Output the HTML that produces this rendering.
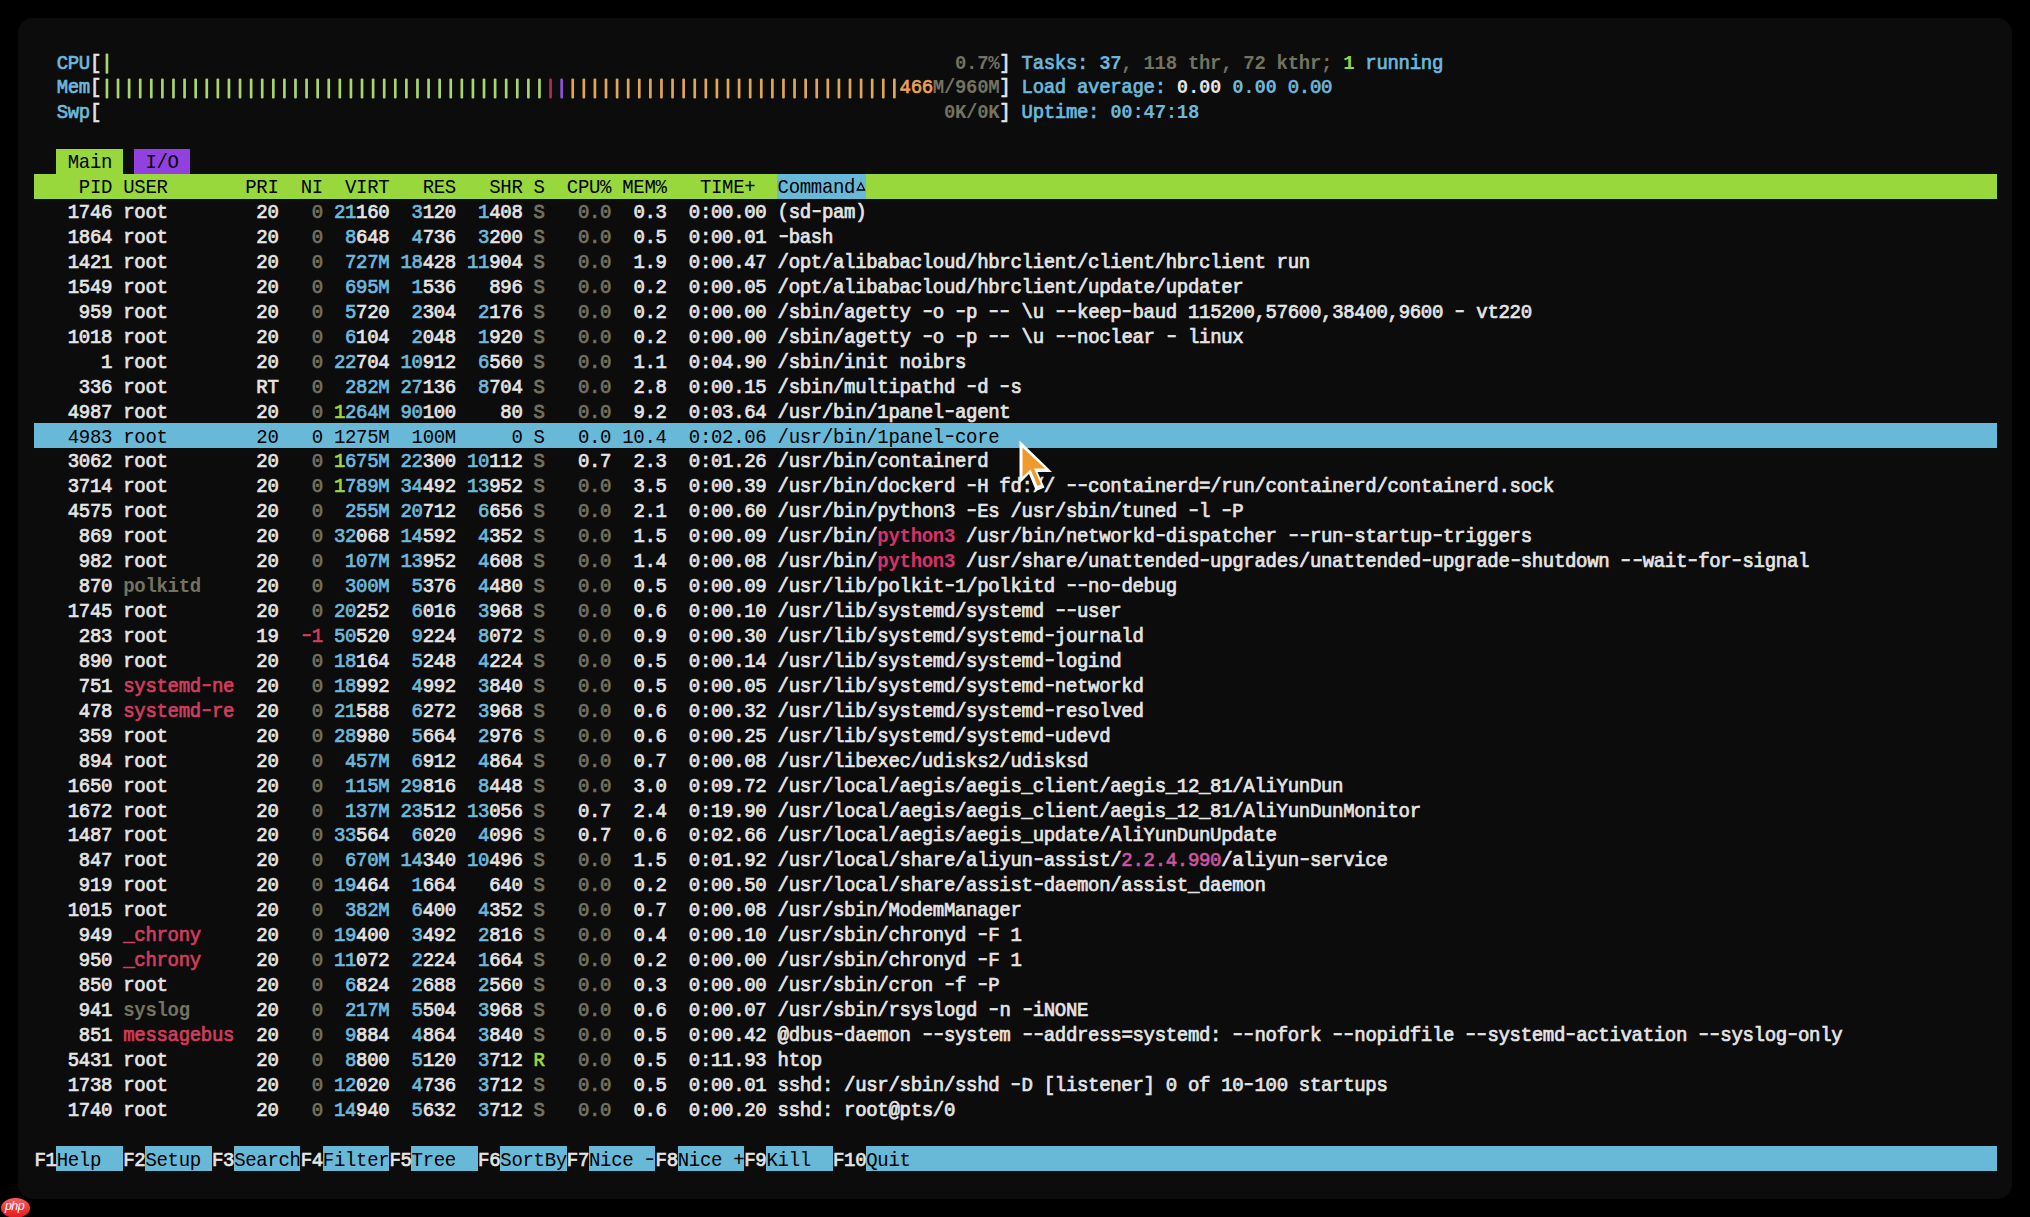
<!DOCTYPE html>
<html><head><meta charset="utf-8"><style>
html,body{margin:0;padding:0;width:2030px;height:1217px;background:#000;overflow:hidden}
#panel{position:absolute;left:18px;top:18px;width:1994px;height:1181px;background:#0c0c0c;border-radius:15px}
.b{position:absolute}
.l{position:absolute;white-space:pre;-webkit-text-stroke-width:0.7px;font-family:"Liberation Mono",monospace;font-size:19px;letter-spacing:-0.3113px;line-height:24.92px;height:24.92px;transform:scaleY(1.06);transform-origin:0 17.5px}
.W{color:#e4e4e4}.G{color:#747260}.C{color:#6cb8dc}.GR{color:#9ad640}.R{color:#d23c5c}.O{color:#eba150}.P{color:#9440e0}
.MAG{color:#c8559e}.PY{color:#d8306a;font-weight:bold;-webkit-text-stroke-width:0.1px}.K{color:#000;-webkit-text-stroke-width:0}
.h{display:inline-block;transform:scaleX(1.35) translateY(-0.8px)}
.GRn{color:#9ad640;-webkit-text-stroke-width:0}.Rn{color:#d23c5c;-webkit-text-stroke-width:0}.Pn{color:#9440e0;-webkit-text-stroke-width:0}.On{color:#eba150;-webkit-text-stroke-width:0}
.CB{color:#6cb8dc;font-weight:bold;-webkit-text-stroke-width:0}.WB{color:#e4e4e4;font-weight:bold;-webkit-text-stroke-width:0}.GRB{color:#9ad640;font-weight:bold;-webkit-text-stroke-width:0}.GB{color:#747260;font-weight:bold;-webkit-text-stroke-width:0}.GS{color:#747260;-webkit-text-stroke-width:0.8px}
</style></head><body>
<div id="panel"></div>

<div class="b" style="left:56.48px;top:148.94px;width:66.54px;height:24.93px;background:#98d83c"></div>
<div class="b" style="left:134.11px;top:148.94px;width:55.45px;height:24.93px;background:#9240e0"></div>
<div class="b" style="left:34.30px;top:173.88px;width:1963.00px;height:24.93px;background:#98d83c"></div>
<div class="b" style="left:777.36px;top:173.88px;width:88.72px;height:24.93px;background:#68b8d8"></div>
<div class="b" style="left:34.30px;top:423.22px;width:1963.00px;height:24.93px;background:#68b8d8"></div>
<div class="b" style="left:56.48px;top:1146.34px;width:66.54px;height:24.93px;background:#68b8d8"></div>
<div class="b" style="left:145.20px;top:1146.34px;width:66.54px;height:24.93px;background:#68b8d8"></div>
<div class="b" style="left:233.93px;top:1146.34px;width:66.54px;height:24.93px;background:#68b8d8"></div>
<div class="b" style="left:322.65px;top:1146.34px;width:66.54px;height:24.93px;background:#68b8d8"></div>
<div class="b" style="left:411.37px;top:1146.34px;width:66.54px;height:24.93px;background:#68b8d8"></div>
<div class="b" style="left:500.10px;top:1146.34px;width:66.54px;height:24.93px;background:#68b8d8"></div>
<div class="b" style="left:588.82px;top:1146.34px;width:66.54px;height:24.93px;background:#68b8d8"></div>
<div class="b" style="left:677.54px;top:1146.34px;width:66.54px;height:24.93px;background:#68b8d8"></div>
<div class="b" style="left:766.27px;top:1146.34px;width:66.54px;height:24.93px;background:#68b8d8"></div>
<div class="b" style="left:866.08px;top:1146.34px;width:1131.22px;height:24.93px;background:#68b8d8"></div>
<svg class="b" style="left:0;top:0" width="2030" height="120" viewBox="0 0 2030 120"><rect x="105.59" y="53.47" width="2.7" height="20.2" rx="1" fill="#a9d66c"/><rect x="105.59" y="78.40" width="2.7" height="20.2" rx="1" fill="#a9d66c"/><rect x="116.68" y="78.40" width="2.7" height="20.2" rx="1" fill="#a9d66c"/><rect x="127.77" y="78.40" width="2.7" height="20.2" rx="1" fill="#a9d66c"/><rect x="138.86" y="78.40" width="2.7" height="20.2" rx="1" fill="#a9d66c"/><rect x="149.95" y="78.40" width="2.7" height="20.2" rx="1" fill="#a9d66c"/><rect x="161.04" y="78.40" width="2.7" height="20.2" rx="1" fill="#a9d66c"/><rect x="172.13" y="78.40" width="2.7" height="20.2" rx="1" fill="#a9d66c"/><rect x="183.22" y="78.40" width="2.7" height="20.2" rx="1" fill="#a9d66c"/><rect x="194.32" y="78.40" width="2.7" height="20.2" rx="1" fill="#a9d66c"/><rect x="205.41" y="78.40" width="2.7" height="20.2" rx="1" fill="#a9d66c"/><rect x="216.50" y="78.40" width="2.7" height="20.2" rx="1" fill="#a9d66c"/><rect x="227.59" y="78.40" width="2.7" height="20.2" rx="1" fill="#a9d66c"/><rect x="238.68" y="78.40" width="2.7" height="20.2" rx="1" fill="#a9d66c"/><rect x="249.77" y="78.40" width="2.7" height="20.2" rx="1" fill="#a9d66c"/><rect x="260.86" y="78.40" width="2.7" height="20.2" rx="1" fill="#a9d66c"/><rect x="271.95" y="78.40" width="2.7" height="20.2" rx="1" fill="#a9d66c"/><rect x="283.04" y="78.40" width="2.7" height="20.2" rx="1" fill="#a9d66c"/><rect x="294.13" y="78.40" width="2.7" height="20.2" rx="1" fill="#a9d66c"/><rect x="305.22" y="78.40" width="2.7" height="20.2" rx="1" fill="#a9d66c"/><rect x="316.31" y="78.40" width="2.7" height="20.2" rx="1" fill="#a9d66c"/><rect x="327.40" y="78.40" width="2.7" height="20.2" rx="1" fill="#a9d66c"/><rect x="338.49" y="78.40" width="2.7" height="20.2" rx="1" fill="#a9d66c"/><rect x="349.58" y="78.40" width="2.7" height="20.2" rx="1" fill="#a9d66c"/><rect x="360.67" y="78.40" width="2.7" height="20.2" rx="1" fill="#a9d66c"/><rect x="371.76" y="78.40" width="2.7" height="20.2" rx="1" fill="#a9d66c"/><rect x="382.85" y="78.40" width="2.7" height="20.2" rx="1" fill="#a9d66c"/><rect x="393.94" y="78.40" width="2.7" height="20.2" rx="1" fill="#a9d66c"/><rect x="405.03" y="78.40" width="2.7" height="20.2" rx="1" fill="#a9d66c"/><rect x="416.12" y="78.40" width="2.7" height="20.2" rx="1" fill="#a9d66c"/><rect x="427.21" y="78.40" width="2.7" height="20.2" rx="1" fill="#a9d66c"/><rect x="438.30" y="78.40" width="2.7" height="20.2" rx="1" fill="#a9d66c"/><rect x="449.39" y="78.40" width="2.7" height="20.2" rx="1" fill="#a9d66c"/><rect x="460.48" y="78.40" width="2.7" height="20.2" rx="1" fill="#a9d66c"/><rect x="471.58" y="78.40" width="2.7" height="20.2" rx="1" fill="#a9d66c"/><rect x="482.67" y="78.40" width="2.7" height="20.2" rx="1" fill="#a9d66c"/><rect x="493.76" y="78.40" width="2.7" height="20.2" rx="1" fill="#a9d66c"/><rect x="504.85" y="78.40" width="2.7" height="20.2" rx="1" fill="#a9d66c"/><rect x="515.94" y="78.40" width="2.7" height="20.2" rx="1" fill="#a9d66c"/><rect x="527.03" y="78.40" width="2.7" height="20.2" rx="1" fill="#a9d66c"/><rect x="538.12" y="78.40" width="2.7" height="20.2" rx="1" fill="#a9d66c"/><rect x="549.21" y="78.40" width="2.7" height="20.2" rx="1" fill="#b42a55"/><rect x="560.30" y="78.40" width="2.7" height="20.2" rx="1" fill="#8c50dc"/><rect x="571.39" y="78.40" width="2.7" height="20.2" rx="1" fill="#e1a55a"/><rect x="582.48" y="78.40" width="2.7" height="20.2" rx="1" fill="#e1a55a"/><rect x="593.57" y="78.40" width="2.7" height="20.2" rx="1" fill="#e1a55a"/><rect x="604.66" y="78.40" width="2.7" height="20.2" rx="1" fill="#e1a55a"/><rect x="615.75" y="78.40" width="2.7" height="20.2" rx="1" fill="#e1a55a"/><rect x="626.84" y="78.40" width="2.7" height="20.2" rx="1" fill="#e1a55a"/><rect x="637.93" y="78.40" width="2.7" height="20.2" rx="1" fill="#e1a55a"/><rect x="649.02" y="78.40" width="2.7" height="20.2" rx="1" fill="#e1a55a"/><rect x="660.11" y="78.40" width="2.7" height="20.2" rx="1" fill="#e1a55a"/><rect x="671.20" y="78.40" width="2.7" height="20.2" rx="1" fill="#e1a55a"/><rect x="682.29" y="78.40" width="2.7" height="20.2" rx="1" fill="#e1a55a"/><rect x="693.38" y="78.40" width="2.7" height="20.2" rx="1" fill="#e1a55a"/><rect x="704.47" y="78.40" width="2.7" height="20.2" rx="1" fill="#e1a55a"/><rect x="715.56" y="78.40" width="2.7" height="20.2" rx="1" fill="#e1a55a"/><rect x="726.65" y="78.40" width="2.7" height="20.2" rx="1" fill="#e1a55a"/><rect x="737.74" y="78.40" width="2.7" height="20.2" rx="1" fill="#e1a55a"/><rect x="748.84" y="78.40" width="2.7" height="20.2" rx="1" fill="#e1a55a"/><rect x="759.93" y="78.40" width="2.7" height="20.2" rx="1" fill="#e1a55a"/><rect x="771.02" y="78.40" width="2.7" height="20.2" rx="1" fill="#e1a55a"/><rect x="782.11" y="78.40" width="2.7" height="20.2" rx="1" fill="#e1a55a"/><rect x="793.20" y="78.40" width="2.7" height="20.2" rx="1" fill="#e1a55a"/><rect x="804.29" y="78.40" width="2.7" height="20.2" rx="1" fill="#e1a55a"/><rect x="815.38" y="78.40" width="2.7" height="20.2" rx="1" fill="#e1a55a"/><rect x="826.47" y="78.40" width="2.7" height="20.2" rx="1" fill="#e1a55a"/><rect x="837.56" y="78.40" width="2.7" height="20.2" rx="1" fill="#e1a55a"/><rect x="848.65" y="78.40" width="2.7" height="20.2" rx="1" fill="#e1a55a"/><rect x="859.74" y="78.40" width="2.7" height="20.2" rx="1" fill="#e1a55a"/><rect x="870.83" y="78.40" width="2.7" height="20.2" rx="1" fill="#e1a55a"/><rect x="881.92" y="78.40" width="2.7" height="20.2" rx="1" fill="#e1a55a"/><rect x="893.01" y="78.40" width="2.7" height="20.2" rx="1" fill="#e1a55a"/></svg>
<div class="l C" style="left:56.68px;top:51.50px">CPU</div>
<div class="l W" style="left:89.95px;top:51.50px">[</div>
<div class="l GB" style="left:955.00px;top:51.50px">0.7%</div>
<div class="l W" style="left:999.36px;top:51.50px">]</div>
<div class="l C" style="left:1021.55px;top:51.50px">Tasks: </div>
<div class="l CB" style="left:1099.18px;top:51.50px">37</div>
<div class="l GB" style="left:1121.36px;top:51.50px">, </div>
<div class="l GB" style="left:1143.54px;top:51.50px">118 thr</div>
<div class="l GB" style="left:1221.17px;top:51.50px">, </div>
<div class="l GB" style="left:1243.35px;top:51.50px">72 kthr</div>
<div class="l GB" style="left:1320.99px;top:51.50px">; </div>
<div class="l GRB" style="left:1343.17px;top:51.50px">1</div>
<div class="l C" style="left:1354.26px;top:51.50px"> running</div>
<div class="l C" style="left:56.68px;top:76.44px">Mem</div>
<div class="l W" style="left:89.95px;top:76.44px">[</div>
<div class="l O" style="left:899.55px;top:76.44px">466</div>
<div class="l GB" style="left:932.82px;top:76.44px">M/960M</div>
<div class="l W" style="left:999.36px;top:76.44px">]</div>
<div class="l C" style="left:1021.55px;top:76.44px">Load average: </div>
<div class="l WB" style="left:1176.81px;top:76.44px">0.00 </div>
<div class="l CB" style="left:1232.26px;top:76.44px">0.00 </div>
<div class="l C" style="left:1287.72px;top:76.44px">0.00</div>
<div class="l C" style="left:56.68px;top:101.37px">Swp</div>
<div class="l W" style="left:89.95px;top:101.37px">[</div>
<div class="l GB" style="left:943.91px;top:101.37px">0K/0K</div>
<div class="l W" style="left:999.36px;top:101.37px">]</div>
<div class="l C" style="left:1021.55px;top:101.37px">Uptime: </div>
<div class="l CB" style="left:1110.27px;top:101.37px">00:47:18</div>
<div class="l K" style="left:67.77px;top:151.24px">Main</div>
<div class="l K" style="left:145.40px;top:151.24px">I/O</div>
<div class="l K" style="left:78.86px;top:176.18px">PID</div>
<div class="l K" style="left:123.22px;top:176.18px">USER</div>
<div class="l K" style="left:245.22px;top:176.18px">PRI</div>
<div class="l K" style="left:300.67px;top:176.18px">NI</div>
<div class="l K" style="left:345.03px;top:176.18px">VIRT</div>
<div class="l K" style="left:422.66px;top:176.18px">RES</div>
<div class="l K" style="left:489.21px;top:176.18px">SHR</div>
<div class="l K" style="left:533.57px;top:176.18px">S</div>
<div class="l K" style="left:566.84px;top:176.18px">CPU%</div>
<div class="l K" style="left:622.29px;top:176.18px">MEM%</div>
<div class="l K" style="left:699.92px;top:176.18px">TIME+</div>
<div class="l K" style="left:777.56px;top:176.18px">Command</div>
<div class="l W" style="left:67.77px;top:201.11px">1746</div>
<div class="l W" style="left:123.22px;top:201.11px">root</div>
<div class="l W" style="left:256.31px;top:201.11px">20</div>
<div class="l G" style="left:311.76px;top:201.11px">0</div>
<div class="l C" style="left:333.94px;top:201.11px">21</div>
<div class="l W" style="left:356.12px;top:201.11px">160</div>
<div class="l C" style="left:411.57px;top:201.11px">3</div>
<div class="l W" style="left:422.66px;top:201.11px">120</div>
<div class="l C" style="left:478.12px;top:201.11px">1</div>
<div class="l W" style="left:489.21px;top:201.11px">408</div>
<div class="l GS" style="left:533.57px;top:201.11px">S</div>
<div class="l G" style="left:577.93px;top:201.11px">0.0</div>
<div class="l W" style="left:633.38px;top:201.11px">0.3</div>
<div class="l W" style="left:688.83px;top:201.11px">0:00.00</div>
<div class="l W" style="left:777.56px;top:201.11px">(sd<span class="h">-</span>pam)</div>
<div class="l W" style="left:67.77px;top:226.05px">1864</div>
<div class="l W" style="left:123.22px;top:226.05px">root</div>
<div class="l W" style="left:256.31px;top:226.05px">20</div>
<div class="l G" style="left:311.76px;top:226.05px">0</div>
<div class="l C" style="left:345.03px;top:226.05px">8</div>
<div class="l W" style="left:356.12px;top:226.05px">648</div>
<div class="l C" style="left:411.57px;top:226.05px">4</div>
<div class="l W" style="left:422.66px;top:226.05px">736</div>
<div class="l C" style="left:478.12px;top:226.05px">3</div>
<div class="l W" style="left:489.21px;top:226.05px">200</div>
<div class="l GS" style="left:533.57px;top:226.05px">S</div>
<div class="l G" style="left:577.93px;top:226.05px">0.0</div>
<div class="l W" style="left:633.38px;top:226.05px">0.5</div>
<div class="l W" style="left:688.83px;top:226.05px">0:00.01</div>
<div class="l W" style="left:777.56px;top:226.05px"><span class="h">-</span>bash</div>
<div class="l W" style="left:67.77px;top:250.98px">1421</div>
<div class="l W" style="left:123.22px;top:250.98px">root</div>
<div class="l W" style="left:256.31px;top:250.98px">20</div>
<div class="l G" style="left:311.76px;top:250.98px">0</div>
<div class="l C" style="left:345.03px;top:250.98px">727M</div>
<div class="l C" style="left:400.48px;top:250.98px">18</div>
<div class="l W" style="left:422.66px;top:250.98px">428</div>
<div class="l C" style="left:467.03px;top:250.98px">11</div>
<div class="l W" style="left:489.21px;top:250.98px">904</div>
<div class="l GS" style="left:533.57px;top:250.98px">S</div>
<div class="l G" style="left:577.93px;top:250.98px">0.0</div>
<div class="l W" style="left:633.38px;top:250.98px">1.9</div>
<div class="l W" style="left:688.83px;top:250.98px">0:00.47</div>
<div class="l W" style="left:777.56px;top:250.98px">/opt/alibabacloud/hbrclient/client/hbrclient run</div>
<div class="l W" style="left:67.77px;top:275.92px">1549</div>
<div class="l W" style="left:123.22px;top:275.92px">root</div>
<div class="l W" style="left:256.31px;top:275.92px">20</div>
<div class="l G" style="left:311.76px;top:275.92px">0</div>
<div class="l C" style="left:345.03px;top:275.92px">695M</div>
<div class="l C" style="left:411.57px;top:275.92px">1</div>
<div class="l W" style="left:422.66px;top:275.92px">536</div>
<div class="l W" style="left:489.21px;top:275.92px">896</div>
<div class="l GS" style="left:533.57px;top:275.92px">S</div>
<div class="l G" style="left:577.93px;top:275.92px">0.0</div>
<div class="l W" style="left:633.38px;top:275.92px">0.2</div>
<div class="l W" style="left:688.83px;top:275.92px">0:00.05</div>
<div class="l W" style="left:777.56px;top:275.92px">/opt/alibabacloud/hbrclient/update/updater</div>
<div class="l W" style="left:78.86px;top:300.85px">959</div>
<div class="l W" style="left:123.22px;top:300.85px">root</div>
<div class="l W" style="left:256.31px;top:300.85px">20</div>
<div class="l G" style="left:311.76px;top:300.85px">0</div>
<div class="l C" style="left:345.03px;top:300.85px">5</div>
<div class="l W" style="left:356.12px;top:300.85px">720</div>
<div class="l C" style="left:411.57px;top:300.85px">2</div>
<div class="l W" style="left:422.66px;top:300.85px">304</div>
<div class="l C" style="left:478.12px;top:300.85px">2</div>
<div class="l W" style="left:489.21px;top:300.85px">176</div>
<div class="l GS" style="left:533.57px;top:300.85px">S</div>
<div class="l G" style="left:577.93px;top:300.85px">0.0</div>
<div class="l W" style="left:633.38px;top:300.85px">0.2</div>
<div class="l W" style="left:688.83px;top:300.85px">0:00.00</div>
<div class="l W" style="left:777.56px;top:300.85px">/sbin/agetty <span class="h">-</span>o <span class="h">-</span>p <span class="h">-</span><span class="h">-</span> \u <span class="h">-</span><span class="h">-</span>keep<span class="h">-</span>baud 115200,57600,38400,9600 <span class="h">-</span> vt220</div>
<div class="l W" style="left:67.77px;top:325.78px">1018</div>
<div class="l W" style="left:123.22px;top:325.78px">root</div>
<div class="l W" style="left:256.31px;top:325.78px">20</div>
<div class="l G" style="left:311.76px;top:325.78px">0</div>
<div class="l C" style="left:345.03px;top:325.78px">6</div>
<div class="l W" style="left:356.12px;top:325.78px">104</div>
<div class="l C" style="left:411.57px;top:325.78px">2</div>
<div class="l W" style="left:422.66px;top:325.78px">048</div>
<div class="l C" style="left:478.12px;top:325.78px">1</div>
<div class="l W" style="left:489.21px;top:325.78px">920</div>
<div class="l GS" style="left:533.57px;top:325.78px">S</div>
<div class="l G" style="left:577.93px;top:325.78px">0.0</div>
<div class="l W" style="left:633.38px;top:325.78px">0.2</div>
<div class="l W" style="left:688.83px;top:325.78px">0:00.00</div>
<div class="l W" style="left:777.56px;top:325.78px">/sbin/agetty <span class="h">-</span>o <span class="h">-</span>p <span class="h">-</span><span class="h">-</span> \u <span class="h">-</span><span class="h">-</span>noclear <span class="h">-</span> linux</div>
<div class="l W" style="left:101.04px;top:350.72px">1</div>
<div class="l W" style="left:123.22px;top:350.72px">root</div>
<div class="l W" style="left:256.31px;top:350.72px">20</div>
<div class="l G" style="left:311.76px;top:350.72px">0</div>
<div class="l C" style="left:333.94px;top:350.72px">22</div>
<div class="l W" style="left:356.12px;top:350.72px">704</div>
<div class="l C" style="left:400.48px;top:350.72px">10</div>
<div class="l W" style="left:422.66px;top:350.72px">912</div>
<div class="l C" style="left:478.12px;top:350.72px">6</div>
<div class="l W" style="left:489.21px;top:350.72px">560</div>
<div class="l GS" style="left:533.57px;top:350.72px">S</div>
<div class="l G" style="left:577.93px;top:350.72px">0.0</div>
<div class="l W" style="left:633.38px;top:350.72px">1.1</div>
<div class="l W" style="left:688.83px;top:350.72px">0:04.90</div>
<div class="l W" style="left:777.56px;top:350.72px">/sbin/init noibrs</div>
<div class="l W" style="left:78.86px;top:375.65px">336</div>
<div class="l W" style="left:123.22px;top:375.65px">root</div>
<div class="l W" style="left:256.31px;top:375.65px">RT</div>
<div class="l G" style="left:311.76px;top:375.65px">0</div>
<div class="l C" style="left:345.03px;top:375.65px">282M</div>
<div class="l C" style="left:400.48px;top:375.65px">27</div>
<div class="l W" style="left:422.66px;top:375.65px">136</div>
<div class="l C" style="left:478.12px;top:375.65px">8</div>
<div class="l W" style="left:489.21px;top:375.65px">704</div>
<div class="l GS" style="left:533.57px;top:375.65px">S</div>
<div class="l G" style="left:577.93px;top:375.65px">0.0</div>
<div class="l W" style="left:633.38px;top:375.65px">2.8</div>
<div class="l W" style="left:688.83px;top:375.65px">0:00.15</div>
<div class="l W" style="left:777.56px;top:375.65px">/sbin/multipathd <span class="h">-</span>d <span class="h">-</span>s</div>
<div class="l W" style="left:67.77px;top:400.59px">4987</div>
<div class="l W" style="left:123.22px;top:400.59px">root</div>
<div class="l W" style="left:256.31px;top:400.59px">20</div>
<div class="l G" style="left:311.76px;top:400.59px">0</div>
<div class="l GR" style="left:333.94px;top:400.59px">1</div>
<div class="l C" style="left:345.03px;top:400.59px">264M</div>
<div class="l C" style="left:400.48px;top:400.59px">90</div>
<div class="l W" style="left:422.66px;top:400.59px">100</div>
<div class="l W" style="left:500.30px;top:400.59px">80</div>
<div class="l GS" style="left:533.57px;top:400.59px">S</div>
<div class="l G" style="left:577.93px;top:400.59px">0.0</div>
<div class="l W" style="left:633.38px;top:400.59px">9.2</div>
<div class="l W" style="left:688.83px;top:400.59px">0:03.64</div>
<div class="l W" style="left:777.56px;top:400.59px">/usr/bin/1panel<span class="h">-</span>agent</div>
<div class="l K" style="left:67.77px;top:425.52px">4983</div>
<div class="l K" style="left:123.22px;top:425.52px">root</div>
<div class="l K" style="left:256.31px;top:425.52px">20</div>
<div class="l K" style="left:311.76px;top:425.52px">0</div>
<div class="l K" style="left:333.94px;top:425.52px">1</div>
<div class="l K" style="left:345.03px;top:425.52px">275M</div>
<div class="l K" style="left:411.57px;top:425.52px">100M</div>
<div class="l K" style="left:511.39px;top:425.52px">0</div>
<div class="l K" style="left:533.57px;top:425.52px">S</div>
<div class="l K" style="left:577.93px;top:425.52px">0.0</div>
<div class="l K" style="left:622.29px;top:425.52px">10.4</div>
<div class="l K" style="left:688.83px;top:425.52px">0:02.06</div>
<div class="l K" style="left:777.56px;top:425.52px">/usr/bin/1panel<span class="h">-</span>core</div>
<div class="l W" style="left:67.77px;top:450.46px">3062</div>
<div class="l W" style="left:123.22px;top:450.46px">root</div>
<div class="l W" style="left:256.31px;top:450.46px">20</div>
<div class="l G" style="left:311.76px;top:450.46px">0</div>
<div class="l GR" style="left:333.94px;top:450.46px">1</div>
<div class="l C" style="left:345.03px;top:450.46px">675M</div>
<div class="l C" style="left:400.48px;top:450.46px">22</div>
<div class="l W" style="left:422.66px;top:450.46px">300</div>
<div class="l C" style="left:467.03px;top:450.46px">10</div>
<div class="l W" style="left:489.21px;top:450.46px">112</div>
<div class="l GS" style="left:533.57px;top:450.46px">S</div>
<div class="l W" style="left:577.93px;top:450.46px">0.7</div>
<div class="l W" style="left:633.38px;top:450.46px">2.3</div>
<div class="l W" style="left:688.83px;top:450.46px">0:01.26</div>
<div class="l W" style="left:777.56px;top:450.46px">/usr/bin/containerd</div>
<div class="l W" style="left:67.77px;top:475.39px">3714</div>
<div class="l W" style="left:123.22px;top:475.39px">root</div>
<div class="l W" style="left:256.31px;top:475.39px">20</div>
<div class="l G" style="left:311.76px;top:475.39px">0</div>
<div class="l GR" style="left:333.94px;top:475.39px">1</div>
<div class="l C" style="left:345.03px;top:475.39px">789M</div>
<div class="l C" style="left:400.48px;top:475.39px">34</div>
<div class="l W" style="left:422.66px;top:475.39px">492</div>
<div class="l C" style="left:467.03px;top:475.39px">13</div>
<div class="l W" style="left:489.21px;top:475.39px">952</div>
<div class="l GS" style="left:533.57px;top:475.39px">S</div>
<div class="l G" style="left:577.93px;top:475.39px">0.0</div>
<div class="l W" style="left:633.38px;top:475.39px">3.5</div>
<div class="l W" style="left:688.83px;top:475.39px">0:00.39</div>
<div class="l W" style="left:777.56px;top:475.39px">/usr/bin/dockerd <span class="h">-</span>H fd:// <span class="h">-</span><span class="h">-</span>containerd=/run/containerd/containerd.sock</div>
<div class="l W" style="left:67.77px;top:500.33px">4575</div>
<div class="l W" style="left:123.22px;top:500.33px">root</div>
<div class="l W" style="left:256.31px;top:500.33px">20</div>
<div class="l G" style="left:311.76px;top:500.33px">0</div>
<div class="l C" style="left:345.03px;top:500.33px">255M</div>
<div class="l C" style="left:400.48px;top:500.33px">20</div>
<div class="l W" style="left:422.66px;top:500.33px">712</div>
<div class="l C" style="left:478.12px;top:500.33px">6</div>
<div class="l W" style="left:489.21px;top:500.33px">656</div>
<div class="l GS" style="left:533.57px;top:500.33px">S</div>
<div class="l G" style="left:577.93px;top:500.33px">0.0</div>
<div class="l W" style="left:633.38px;top:500.33px">2.1</div>
<div class="l W" style="left:688.83px;top:500.33px">0:00.60</div>
<div class="l W" style="left:777.56px;top:500.33px">/usr/bin/python3 <span class="h">-</span>Es /usr/sbin/tuned <span class="h">-</span>l <span class="h">-</span>P</div>
<div class="l W" style="left:78.86px;top:525.26px">869</div>
<div class="l W" style="left:123.22px;top:525.26px">root</div>
<div class="l W" style="left:256.31px;top:525.26px">20</div>
<div class="l G" style="left:311.76px;top:525.26px">0</div>
<div class="l C" style="left:333.94px;top:525.26px">32</div>
<div class="l W" style="left:356.12px;top:525.26px">068</div>
<div class="l C" style="left:400.48px;top:525.26px">14</div>
<div class="l W" style="left:422.66px;top:525.26px">592</div>
<div class="l C" style="left:478.12px;top:525.26px">4</div>
<div class="l W" style="left:489.21px;top:525.26px">352</div>
<div class="l GS" style="left:533.57px;top:525.26px">S</div>
<div class="l G" style="left:577.93px;top:525.26px">0.0</div>
<div class="l W" style="left:633.38px;top:525.26px">1.5</div>
<div class="l W" style="left:688.83px;top:525.26px">0:00.09</div>
<div class="l W" style="left:777.56px;top:525.26px">/usr/bin/</div>
<div class="l PY" style="left:877.37px;top:525.26px">python3</div>
<div class="l W" style="left:955.00px;top:525.26px"> /usr/bin/networkd<span class="h">-</span>dispatcher <span class="h">-</span><span class="h">-</span>run<span class="h">-</span>startup<span class="h">-</span>triggers</div>
<div class="l W" style="left:78.86px;top:550.20px">982</div>
<div class="l W" style="left:123.22px;top:550.20px">root</div>
<div class="l W" style="left:256.31px;top:550.20px">20</div>
<div class="l G" style="left:311.76px;top:550.20px">0</div>
<div class="l C" style="left:345.03px;top:550.20px">107M</div>
<div class="l C" style="left:400.48px;top:550.20px">13</div>
<div class="l W" style="left:422.66px;top:550.20px">952</div>
<div class="l C" style="left:478.12px;top:550.20px">4</div>
<div class="l W" style="left:489.21px;top:550.20px">608</div>
<div class="l GS" style="left:533.57px;top:550.20px">S</div>
<div class="l G" style="left:577.93px;top:550.20px">0.0</div>
<div class="l W" style="left:633.38px;top:550.20px">1.4</div>
<div class="l W" style="left:688.83px;top:550.20px">0:00.08</div>
<div class="l W" style="left:777.56px;top:550.20px">/usr/bin/</div>
<div class="l PY" style="left:877.37px;top:550.20px">python3</div>
<div class="l W" style="left:955.00px;top:550.20px"> /usr/share/unattended<span class="h">-</span>upgrades/unattended<span class="h">-</span>upgrade<span class="h">-</span>shutdown <span class="h">-</span><span class="h">-</span>wait<span class="h">-</span>for<span class="h">-</span>signal</div>
<div class="l W" style="left:78.86px;top:575.13px">870</div>
<div class="l GB" style="left:123.22px;top:575.13px">polkitd</div>
<div class="l W" style="left:256.31px;top:575.13px">20</div>
<div class="l G" style="left:311.76px;top:575.13px">0</div>
<div class="l C" style="left:345.03px;top:575.13px">300M</div>
<div class="l C" style="left:411.57px;top:575.13px">5</div>
<div class="l W" style="left:422.66px;top:575.13px">376</div>
<div class="l C" style="left:478.12px;top:575.13px">4</div>
<div class="l W" style="left:489.21px;top:575.13px">480</div>
<div class="l GS" style="left:533.57px;top:575.13px">S</div>
<div class="l G" style="left:577.93px;top:575.13px">0.0</div>
<div class="l W" style="left:633.38px;top:575.13px">0.5</div>
<div class="l W" style="left:688.83px;top:575.13px">0:00.09</div>
<div class="l W" style="left:777.56px;top:575.13px">/usr/lib/polkit<span class="h">-</span>1/polkitd <span class="h">-</span><span class="h">-</span>no<span class="h">-</span>debug</div>
<div class="l W" style="left:67.77px;top:600.07px">1745</div>
<div class="l W" style="left:123.22px;top:600.07px">root</div>
<div class="l W" style="left:256.31px;top:600.07px">20</div>
<div class="l G" style="left:311.76px;top:600.07px">0</div>
<div class="l C" style="left:333.94px;top:600.07px">20</div>
<div class="l W" style="left:356.12px;top:600.07px">252</div>
<div class="l C" style="left:411.57px;top:600.07px">6</div>
<div class="l W" style="left:422.66px;top:600.07px">016</div>
<div class="l C" style="left:478.12px;top:600.07px">3</div>
<div class="l W" style="left:489.21px;top:600.07px">968</div>
<div class="l GS" style="left:533.57px;top:600.07px">S</div>
<div class="l G" style="left:577.93px;top:600.07px">0.0</div>
<div class="l W" style="left:633.38px;top:600.07px">0.6</div>
<div class="l W" style="left:688.83px;top:600.07px">0:00.10</div>
<div class="l W" style="left:777.56px;top:600.07px">/usr/lib/systemd/systemd <span class="h">-</span><span class="h">-</span>user</div>
<div class="l W" style="left:78.86px;top:625.00px">283</div>
<div class="l W" style="left:123.22px;top:625.00px">root</div>
<div class="l W" style="left:256.31px;top:625.00px">19</div>
<div class="l R" style="left:300.67px;top:625.00px"><span class="h">-</span>1</div>
<div class="l C" style="left:333.94px;top:625.00px">50</div>
<div class="l W" style="left:356.12px;top:625.00px">520</div>
<div class="l C" style="left:411.57px;top:625.00px">9</div>
<div class="l W" style="left:422.66px;top:625.00px">224</div>
<div class="l C" style="left:478.12px;top:625.00px">8</div>
<div class="l W" style="left:489.21px;top:625.00px">072</div>
<div class="l GS" style="left:533.57px;top:625.00px">S</div>
<div class="l G" style="left:577.93px;top:625.00px">0.0</div>
<div class="l W" style="left:633.38px;top:625.00px">0.9</div>
<div class="l W" style="left:688.83px;top:625.00px">0:00.30</div>
<div class="l W" style="left:777.56px;top:625.00px">/usr/lib/systemd/systemd<span class="h">-</span>journald</div>
<div class="l W" style="left:78.86px;top:649.94px">890</div>
<div class="l W" style="left:123.22px;top:649.94px">root</div>
<div class="l W" style="left:256.31px;top:649.94px">20</div>
<div class="l G" style="left:311.76px;top:649.94px">0</div>
<div class="l C" style="left:333.94px;top:649.94px">18</div>
<div class="l W" style="left:356.12px;top:649.94px">164</div>
<div class="l C" style="left:411.57px;top:649.94px">5</div>
<div class="l W" style="left:422.66px;top:649.94px">248</div>
<div class="l C" style="left:478.12px;top:649.94px">4</div>
<div class="l W" style="left:489.21px;top:649.94px">224</div>
<div class="l GS" style="left:533.57px;top:649.94px">S</div>
<div class="l G" style="left:577.93px;top:649.94px">0.0</div>
<div class="l W" style="left:633.38px;top:649.94px">0.5</div>
<div class="l W" style="left:688.83px;top:649.94px">0:00.14</div>
<div class="l W" style="left:777.56px;top:649.94px">/usr/lib/systemd/systemd<span class="h">-</span>logind</div>
<div class="l W" style="left:78.86px;top:674.88px">751</div>
<div class="l R" style="left:123.22px;top:674.88px">systemd<span class="h">-</span>ne</div>
<div class="l W" style="left:256.31px;top:674.88px">20</div>
<div class="l G" style="left:311.76px;top:674.88px">0</div>
<div class="l C" style="left:333.94px;top:674.88px">18</div>
<div class="l W" style="left:356.12px;top:674.88px">992</div>
<div class="l C" style="left:411.57px;top:674.88px">4</div>
<div class="l W" style="left:422.66px;top:674.88px">992</div>
<div class="l C" style="left:478.12px;top:674.88px">3</div>
<div class="l W" style="left:489.21px;top:674.88px">840</div>
<div class="l GS" style="left:533.57px;top:674.88px">S</div>
<div class="l G" style="left:577.93px;top:674.88px">0.0</div>
<div class="l W" style="left:633.38px;top:674.88px">0.5</div>
<div class="l W" style="left:688.83px;top:674.88px">0:00.05</div>
<div class="l W" style="left:777.56px;top:674.88px">/usr/lib/systemd/systemd<span class="h">-</span>networkd</div>
<div class="l W" style="left:78.86px;top:699.81px">478</div>
<div class="l R" style="left:123.22px;top:699.81px">systemd<span class="h">-</span>re</div>
<div class="l W" style="left:256.31px;top:699.81px">20</div>
<div class="l G" style="left:311.76px;top:699.81px">0</div>
<div class="l C" style="left:333.94px;top:699.81px">21</div>
<div class="l W" style="left:356.12px;top:699.81px">588</div>
<div class="l C" style="left:411.57px;top:699.81px">6</div>
<div class="l W" style="left:422.66px;top:699.81px">272</div>
<div class="l C" style="left:478.12px;top:699.81px">3</div>
<div class="l W" style="left:489.21px;top:699.81px">968</div>
<div class="l GS" style="left:533.57px;top:699.81px">S</div>
<div class="l G" style="left:577.93px;top:699.81px">0.0</div>
<div class="l W" style="left:633.38px;top:699.81px">0.6</div>
<div class="l W" style="left:688.83px;top:699.81px">0:00.32</div>
<div class="l W" style="left:777.56px;top:699.81px">/usr/lib/systemd/systemd<span class="h">-</span>resolved</div>
<div class="l W" style="left:78.86px;top:724.75px">359</div>
<div class="l W" style="left:123.22px;top:724.75px">root</div>
<div class="l W" style="left:256.31px;top:724.75px">20</div>
<div class="l G" style="left:311.76px;top:724.75px">0</div>
<div class="l C" style="left:333.94px;top:724.75px">28</div>
<div class="l W" style="left:356.12px;top:724.75px">980</div>
<div class="l C" style="left:411.57px;top:724.75px">5</div>
<div class="l W" style="left:422.66px;top:724.75px">664</div>
<div class="l C" style="left:478.12px;top:724.75px">2</div>
<div class="l W" style="left:489.21px;top:724.75px">976</div>
<div class="l GS" style="left:533.57px;top:724.75px">S</div>
<div class="l G" style="left:577.93px;top:724.75px">0.0</div>
<div class="l W" style="left:633.38px;top:724.75px">0.6</div>
<div class="l W" style="left:688.83px;top:724.75px">0:00.25</div>
<div class="l W" style="left:777.56px;top:724.75px">/usr/lib/systemd/systemd<span class="h">-</span>udevd</div>
<div class="l W" style="left:78.86px;top:749.68px">894</div>
<div class="l W" style="left:123.22px;top:749.68px">root</div>
<div class="l W" style="left:256.31px;top:749.68px">20</div>
<div class="l G" style="left:311.76px;top:749.68px">0</div>
<div class="l C" style="left:345.03px;top:749.68px">457M</div>
<div class="l C" style="left:411.57px;top:749.68px">6</div>
<div class="l W" style="left:422.66px;top:749.68px">912</div>
<div class="l C" style="left:478.12px;top:749.68px">4</div>
<div class="l W" style="left:489.21px;top:749.68px">864</div>
<div class="l GS" style="left:533.57px;top:749.68px">S</div>
<div class="l G" style="left:577.93px;top:749.68px">0.0</div>
<div class="l W" style="left:633.38px;top:749.68px">0.7</div>
<div class="l W" style="left:688.83px;top:749.68px">0:00.08</div>
<div class="l W" style="left:777.56px;top:749.68px">/usr/libexec/udisks2/udisksd</div>
<div class="l W" style="left:67.77px;top:774.62px">1650</div>
<div class="l W" style="left:123.22px;top:774.62px">root</div>
<div class="l W" style="left:256.31px;top:774.62px">20</div>
<div class="l G" style="left:311.76px;top:774.62px">0</div>
<div class="l C" style="left:345.03px;top:774.62px">115M</div>
<div class="l C" style="left:400.48px;top:774.62px">29</div>
<div class="l W" style="left:422.66px;top:774.62px">816</div>
<div class="l C" style="left:478.12px;top:774.62px">8</div>
<div class="l W" style="left:489.21px;top:774.62px">448</div>
<div class="l GS" style="left:533.57px;top:774.62px">S</div>
<div class="l G" style="left:577.93px;top:774.62px">0.0</div>
<div class="l W" style="left:633.38px;top:774.62px">3.0</div>
<div class="l W" style="left:688.83px;top:774.62px">0:09.72</div>
<div class="l W" style="left:777.56px;top:774.62px">/usr/local/aegis/aegis_client/aegis_12_81/AliYunDun</div>
<div class="l W" style="left:67.77px;top:799.55px">1672</div>
<div class="l W" style="left:123.22px;top:799.55px">root</div>
<div class="l W" style="left:256.31px;top:799.55px">20</div>
<div class="l G" style="left:311.76px;top:799.55px">0</div>
<div class="l C" style="left:345.03px;top:799.55px">137M</div>
<div class="l C" style="left:400.48px;top:799.55px">23</div>
<div class="l W" style="left:422.66px;top:799.55px">512</div>
<div class="l C" style="left:467.03px;top:799.55px">13</div>
<div class="l W" style="left:489.21px;top:799.55px">056</div>
<div class="l GS" style="left:533.57px;top:799.55px">S</div>
<div class="l W" style="left:577.93px;top:799.55px">0.7</div>
<div class="l W" style="left:633.38px;top:799.55px">2.4</div>
<div class="l W" style="left:688.83px;top:799.55px">0:19.90</div>
<div class="l W" style="left:777.56px;top:799.55px">/usr/local/aegis/aegis_client/aegis_12_81/AliYunDunMonitor</div>
<div class="l W" style="left:67.77px;top:824.49px">1487</div>
<div class="l W" style="left:123.22px;top:824.49px">root</div>
<div class="l W" style="left:256.31px;top:824.49px">20</div>
<div class="l G" style="left:311.76px;top:824.49px">0</div>
<div class="l C" style="left:333.94px;top:824.49px">33</div>
<div class="l W" style="left:356.12px;top:824.49px">564</div>
<div class="l C" style="left:411.57px;top:824.49px">6</div>
<div class="l W" style="left:422.66px;top:824.49px">020</div>
<div class="l C" style="left:478.12px;top:824.49px">4</div>
<div class="l W" style="left:489.21px;top:824.49px">096</div>
<div class="l GS" style="left:533.57px;top:824.49px">S</div>
<div class="l W" style="left:577.93px;top:824.49px">0.7</div>
<div class="l W" style="left:633.38px;top:824.49px">0.6</div>
<div class="l W" style="left:688.83px;top:824.49px">0:02.66</div>
<div class="l W" style="left:777.56px;top:824.49px">/usr/local/aegis/aegis_update/AliYunDunUpdate</div>
<div class="l W" style="left:78.86px;top:849.42px">847</div>
<div class="l W" style="left:123.22px;top:849.42px">root</div>
<div class="l W" style="left:256.31px;top:849.42px">20</div>
<div class="l G" style="left:311.76px;top:849.42px">0</div>
<div class="l C" style="left:345.03px;top:849.42px">670M</div>
<div class="l C" style="left:400.48px;top:849.42px">14</div>
<div class="l W" style="left:422.66px;top:849.42px">340</div>
<div class="l C" style="left:467.03px;top:849.42px">10</div>
<div class="l W" style="left:489.21px;top:849.42px">496</div>
<div class="l GS" style="left:533.57px;top:849.42px">S</div>
<div class="l G" style="left:577.93px;top:849.42px">0.0</div>
<div class="l W" style="left:633.38px;top:849.42px">1.5</div>
<div class="l W" style="left:688.83px;top:849.42px">0:01.92</div>
<div class="l W" style="left:777.56px;top:849.42px">/usr/local/share/aliyun<span class="h">-</span>assist/</div>
<div class="l MAG" style="left:1121.36px;top:849.42px">2.2.4.990</div>
<div class="l W" style="left:1221.17px;top:849.42px">/aliyun<span class="h">-</span>service</div>
<div class="l W" style="left:78.86px;top:874.35px">919</div>
<div class="l W" style="left:123.22px;top:874.35px">root</div>
<div class="l W" style="left:256.31px;top:874.35px">20</div>
<div class="l G" style="left:311.76px;top:874.35px">0</div>
<div class="l C" style="left:333.94px;top:874.35px">19</div>
<div class="l W" style="left:356.12px;top:874.35px">464</div>
<div class="l C" style="left:411.57px;top:874.35px">1</div>
<div class="l W" style="left:422.66px;top:874.35px">664</div>
<div class="l W" style="left:489.21px;top:874.35px">640</div>
<div class="l GS" style="left:533.57px;top:874.35px">S</div>
<div class="l G" style="left:577.93px;top:874.35px">0.0</div>
<div class="l W" style="left:633.38px;top:874.35px">0.2</div>
<div class="l W" style="left:688.83px;top:874.35px">0:00.50</div>
<div class="l W" style="left:777.56px;top:874.35px">/usr/local/share/assist<span class="h">-</span>daemon/assist_daemon</div>
<div class="l W" style="left:67.77px;top:899.29px">1015</div>
<div class="l W" style="left:123.22px;top:899.29px">root</div>
<div class="l W" style="left:256.31px;top:899.29px">20</div>
<div class="l G" style="left:311.76px;top:899.29px">0</div>
<div class="l C" style="left:345.03px;top:899.29px">382M</div>
<div class="l C" style="left:411.57px;top:899.29px">6</div>
<div class="l W" style="left:422.66px;top:899.29px">400</div>
<div class="l C" style="left:478.12px;top:899.29px">4</div>
<div class="l W" style="left:489.21px;top:899.29px">352</div>
<div class="l GS" style="left:533.57px;top:899.29px">S</div>
<div class="l G" style="left:577.93px;top:899.29px">0.0</div>
<div class="l W" style="left:633.38px;top:899.29px">0.7</div>
<div class="l W" style="left:688.83px;top:899.29px">0:00.08</div>
<div class="l W" style="left:777.56px;top:899.29px">/usr/sbin/ModemManager</div>
<div class="l W" style="left:78.86px;top:924.22px">949</div>
<div class="l R" style="left:123.22px;top:924.22px">_chrony</div>
<div class="l W" style="left:256.31px;top:924.22px">20</div>
<div class="l G" style="left:311.76px;top:924.22px">0</div>
<div class="l C" style="left:333.94px;top:924.22px">19</div>
<div class="l W" style="left:356.12px;top:924.22px">400</div>
<div class="l C" style="left:411.57px;top:924.22px">3</div>
<div class="l W" style="left:422.66px;top:924.22px">492</div>
<div class="l C" style="left:478.12px;top:924.22px">2</div>
<div class="l W" style="left:489.21px;top:924.22px">816</div>
<div class="l GS" style="left:533.57px;top:924.22px">S</div>
<div class="l G" style="left:577.93px;top:924.22px">0.0</div>
<div class="l W" style="left:633.38px;top:924.22px">0.4</div>
<div class="l W" style="left:688.83px;top:924.22px">0:00.10</div>
<div class="l W" style="left:777.56px;top:924.22px">/usr/sbin/chronyd <span class="h">-</span>F 1</div>
<div class="l W" style="left:78.86px;top:949.16px">950</div>
<div class="l R" style="left:123.22px;top:949.16px">_chrony</div>
<div class="l W" style="left:256.31px;top:949.16px">20</div>
<div class="l G" style="left:311.76px;top:949.16px">0</div>
<div class="l C" style="left:333.94px;top:949.16px">11</div>
<div class="l W" style="left:356.12px;top:949.16px">072</div>
<div class="l C" style="left:411.57px;top:949.16px">2</div>
<div class="l W" style="left:422.66px;top:949.16px">224</div>
<div class="l C" style="left:478.12px;top:949.16px">1</div>
<div class="l W" style="left:489.21px;top:949.16px">664</div>
<div class="l GS" style="left:533.57px;top:949.16px">S</div>
<div class="l G" style="left:577.93px;top:949.16px">0.0</div>
<div class="l W" style="left:633.38px;top:949.16px">0.2</div>
<div class="l W" style="left:688.83px;top:949.16px">0:00.00</div>
<div class="l W" style="left:777.56px;top:949.16px">/usr/sbin/chronyd <span class="h">-</span>F 1</div>
<div class="l W" style="left:78.86px;top:974.09px">850</div>
<div class="l W" style="left:123.22px;top:974.09px">root</div>
<div class="l W" style="left:256.31px;top:974.09px">20</div>
<div class="l G" style="left:311.76px;top:974.09px">0</div>
<div class="l C" style="left:345.03px;top:974.09px">6</div>
<div class="l W" style="left:356.12px;top:974.09px">824</div>
<div class="l C" style="left:411.57px;top:974.09px">2</div>
<div class="l W" style="left:422.66px;top:974.09px">688</div>
<div class="l C" style="left:478.12px;top:974.09px">2</div>
<div class="l W" style="left:489.21px;top:974.09px">560</div>
<div class="l GS" style="left:533.57px;top:974.09px">S</div>
<div class="l G" style="left:577.93px;top:974.09px">0.0</div>
<div class="l W" style="left:633.38px;top:974.09px">0.3</div>
<div class="l W" style="left:688.83px;top:974.09px">0:00.00</div>
<div class="l W" style="left:777.56px;top:974.09px">/usr/sbin/cron <span class="h">-</span>f <span class="h">-</span>P</div>
<div class="l W" style="left:78.86px;top:999.03px">941</div>
<div class="l GB" style="left:123.22px;top:999.03px">syslog</div>
<div class="l W" style="left:256.31px;top:999.03px">20</div>
<div class="l G" style="left:311.76px;top:999.03px">0</div>
<div class="l C" style="left:345.03px;top:999.03px">217M</div>
<div class="l C" style="left:411.57px;top:999.03px">5</div>
<div class="l W" style="left:422.66px;top:999.03px">504</div>
<div class="l C" style="left:478.12px;top:999.03px">3</div>
<div class="l W" style="left:489.21px;top:999.03px">968</div>
<div class="l GS" style="left:533.57px;top:999.03px">S</div>
<div class="l G" style="left:577.93px;top:999.03px">0.0</div>
<div class="l W" style="left:633.38px;top:999.03px">0.6</div>
<div class="l W" style="left:688.83px;top:999.03px">0:00.07</div>
<div class="l W" style="left:777.56px;top:999.03px">/usr/sbin/rsyslogd <span class="h">-</span>n <span class="h">-</span>iNONE</div>
<div class="l W" style="left:78.86px;top:1023.96px">851</div>
<div class="l R" style="left:123.22px;top:1023.96px">messagebus</div>
<div class="l W" style="left:256.31px;top:1023.96px">20</div>
<div class="l G" style="left:311.76px;top:1023.96px">0</div>
<div class="l C" style="left:345.03px;top:1023.96px">9</div>
<div class="l W" style="left:356.12px;top:1023.96px">884</div>
<div class="l C" style="left:411.57px;top:1023.96px">4</div>
<div class="l W" style="left:422.66px;top:1023.96px">864</div>
<div class="l C" style="left:478.12px;top:1023.96px">3</div>
<div class="l W" style="left:489.21px;top:1023.96px">840</div>
<div class="l GS" style="left:533.57px;top:1023.96px">S</div>
<div class="l G" style="left:577.93px;top:1023.96px">0.0</div>
<div class="l W" style="left:633.38px;top:1023.96px">0.5</div>
<div class="l W" style="left:688.83px;top:1023.96px">0:00.42</div>
<div class="l W" style="left:777.56px;top:1023.96px">@dbus<span class="h">-</span>daemon <span class="h">-</span><span class="h">-</span>system <span class="h">-</span><span class="h">-</span>address=systemd: <span class="h">-</span><span class="h">-</span>nofork <span class="h">-</span><span class="h">-</span>nopidfile <span class="h">-</span><span class="h">-</span>systemd<span class="h">-</span>activation <span class="h">-</span><span class="h">-</span>syslog<span class="h">-</span>only</div>
<div class="l W" style="left:67.77px;top:1048.90px">5431</div>
<div class="l W" style="left:123.22px;top:1048.90px">root</div>
<div class="l W" style="left:256.31px;top:1048.90px">20</div>
<div class="l G" style="left:311.76px;top:1048.90px">0</div>
<div class="l C" style="left:345.03px;top:1048.90px">8</div>
<div class="l W" style="left:356.12px;top:1048.90px">800</div>
<div class="l C" style="left:411.57px;top:1048.90px">5</div>
<div class="l W" style="left:422.66px;top:1048.90px">120</div>
<div class="l C" style="left:478.12px;top:1048.90px">3</div>
<div class="l W" style="left:489.21px;top:1048.90px">712</div>
<div class="l GR" style="left:533.57px;top:1048.90px">R</div>
<div class="l G" style="left:577.93px;top:1048.90px">0.0</div>
<div class="l W" style="left:633.38px;top:1048.90px">0.5</div>
<div class="l W" style="left:688.83px;top:1048.90px">0:11.93</div>
<div class="l W" style="left:777.56px;top:1048.90px">htop</div>
<div class="l W" style="left:67.77px;top:1073.83px">1738</div>
<div class="l W" style="left:123.22px;top:1073.83px">root</div>
<div class="l W" style="left:256.31px;top:1073.83px">20</div>
<div class="l G" style="left:311.76px;top:1073.83px">0</div>
<div class="l C" style="left:333.94px;top:1073.83px">12</div>
<div class="l W" style="left:356.12px;top:1073.83px">020</div>
<div class="l C" style="left:411.57px;top:1073.83px">4</div>
<div class="l W" style="left:422.66px;top:1073.83px">736</div>
<div class="l C" style="left:478.12px;top:1073.83px">3</div>
<div class="l W" style="left:489.21px;top:1073.83px">712</div>
<div class="l GS" style="left:533.57px;top:1073.83px">S</div>
<div class="l G" style="left:577.93px;top:1073.83px">0.0</div>
<div class="l W" style="left:633.38px;top:1073.83px">0.5</div>
<div class="l W" style="left:688.83px;top:1073.83px">0:00.01</div>
<div class="l W" style="left:777.56px;top:1073.83px">sshd: /usr/sbin/sshd <span class="h">-</span>D [listener] 0 of 10<span class="h">-</span>100 startups</div>
<div class="l W" style="left:67.77px;top:1098.77px">1740</div>
<div class="l W" style="left:123.22px;top:1098.77px">root</div>
<div class="l W" style="left:256.31px;top:1098.77px">20</div>
<div class="l G" style="left:311.76px;top:1098.77px">0</div>
<div class="l C" style="left:333.94px;top:1098.77px">14</div>
<div class="l W" style="left:356.12px;top:1098.77px">940</div>
<div class="l C" style="left:411.57px;top:1098.77px">5</div>
<div class="l W" style="left:422.66px;top:1098.77px">632</div>
<div class="l C" style="left:478.12px;top:1098.77px">3</div>
<div class="l W" style="left:489.21px;top:1098.77px">712</div>
<div class="l GS" style="left:533.57px;top:1098.77px">S</div>
<div class="l G" style="left:577.93px;top:1098.77px">0.0</div>
<div class="l W" style="left:633.38px;top:1098.77px">0.6</div>
<div class="l W" style="left:688.83px;top:1098.77px">0:00.20</div>
<div class="l W" style="left:777.56px;top:1098.77px">sshd: root@pts/0</div>
<div class="l W" style="left:34.50px;top:1148.64px">F1</div>
<div class="l K" style="left:56.68px;top:1148.64px">Help  </div>
<div class="l W" style="left:123.22px;top:1148.64px">F2</div>
<div class="l K" style="left:145.40px;top:1148.64px">Setup </div>
<div class="l W" style="left:211.95px;top:1148.64px">F3</div>
<div class="l K" style="left:234.13px;top:1148.64px">Search</div>
<div class="l W" style="left:300.67px;top:1148.64px">F4</div>
<div class="l K" style="left:322.85px;top:1148.64px">Filter</div>
<div class="l W" style="left:389.39px;top:1148.64px">F5</div>
<div class="l K" style="left:411.57px;top:1148.64px">Tree  </div>
<div class="l W" style="left:478.12px;top:1148.64px">F6</div>
<div class="l K" style="left:500.30px;top:1148.64px">SortBy</div>
<div class="l W" style="left:566.84px;top:1148.64px">F7</div>
<div class="l K" style="left:589.02px;top:1148.64px">Nice <span class="h">-</span></div>
<div class="l W" style="left:655.56px;top:1148.64px">F8</div>
<div class="l K" style="left:677.74px;top:1148.64px">Nice +</div>
<div class="l W" style="left:744.29px;top:1148.64px">F9</div>
<div class="l K" style="left:766.47px;top:1148.64px">Kill  </div>
<div class="l W" style="left:833.01px;top:1148.64px">F10</div>
<div class="l K" style="left:866.28px;top:1148.64px">Quit</div>
<svg class="b" style="left:854.99px;top:173.88px" width="12" height="25" viewBox="0 0 12 25"><polygon points="5.9,8.9 9.6,16.0 2.2,16.0" fill="none" stroke="#000" stroke-width="1.3" stroke-linejoin="miter"/></svg>
<svg class="b" style="left:0;top:0" width="2030" height="1217" viewBox="0 0 2030 1217">
<polygon points="1019.5,440.5 1019.5,483.5 1029,474 1036,491 1044.5,487.5 1037.5,472 1052,472" fill="#fff"/>
<polygon points="1022.5,447.5 1022.5,477 1030.5,469.5 1037.5,486 1041,484.5 1034,468.5 1045,468.5" fill="#ef9b2c"/>
</svg>
<div class="b" style="left:1px;top:1198px;width:29px;height:20px;border-radius:50%;background:linear-gradient(#ff5a5a,#e01a1a)"></div>
<div class="b" style="left:5px;top:1197px;width:24px;height:18px;font-family:'Liberation Sans',sans-serif;font-style:italic;font-size:12.5px;line-height:18px;color:#fff;letter-spacing:-0.6px">php</div>
</body></html>
